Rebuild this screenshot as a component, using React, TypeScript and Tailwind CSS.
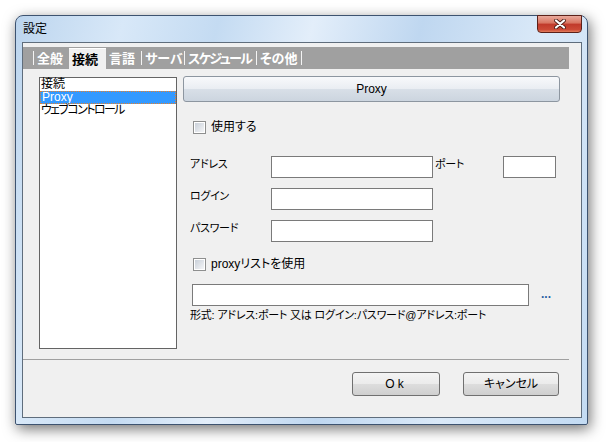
import React from 'react';

const font = "font-['Liberation_Sans','Noto_Sans_CJK_JP',sans-serif] [font-feature-settings:'palt']";

function Sep() {
  return <span className="w-px h-[14px] bg-[#f4f4f4] self-center shrink-0" />;
}

function Tab({ label, width, selected, tight }: { label: string; width: string; selected?: boolean; tight?: boolean }) {
  const track = tight ? 'tracking-[-1.6px]' : '';
  if (selected) {
    return (
      <div
        className={`${width} shrink-0 h-[21px] bg-[#f0f0f0] border-t border-white flex items-center pl-[3px] text-[13px] font-bold text-black leading-none whitespace-nowrap`}
      >
        {label}
      </div>
    );
  }
  return (
    <div
      className={`${width} ${track} shrink-0 overflow-hidden h-[22px] flex items-center pl-[3px] text-[13px] font-bold text-white leading-none whitespace-nowrap`}
    >
      {label}
    </div>
  );
}

function Checkbox({ label }: { label: string }) {
  return (
    <div className="flex items-center h-[13px]">
      <span className="w-[13px] h-[13px] border border-[#8e8f8f] bg-white p-px">
        <span className="block w-full h-full bg-[linear-gradient(135deg,#c9d0d9,#f4f5f7)]" />
      </span>
      <span className="ml-[5px] text-[12px] leading-[13px] text-black whitespace-nowrap">{label}</span>
    </div>
  );
}

function Field({ w }: { w: string }) {
  return <div className={`${w} h-[22px] border border-[#7a7a7a] bg-white`} />;
}

function Label({ text, w }: { text: string; w: string }) {
  return (
    <div className={`${w} h-[22px] text-[11px] leading-[16px] text-black tracking-[-0.3px] whitespace-nowrap`}>
      {text}
    </div>
  );
}

export default function App() {
  return (
    <div className={`w-[606px] h-[442px] bg-white pl-[15px] pt-[15px] ${font}`}>
      <div className="w-[573px] h-[410px] rounded-t-[8px] rounded-b-[2px] border border-[#3d5370] shadow-[2px_4px_14px_rgba(0,0,0,0.55)] bg-[linear-gradient(105deg,#bcd5ee_0%,#d8e8f8_16%,#c4dbf2_30%,#e3eefa_44%,#bfd7f0_60%,#dae9f8_78%,#c3dbf3_100%)] flex flex-col">
        {/* title bar */}
        <div className="h-[26px] flex items-start">
          <div className="pl-[7px] pt-[7px] text-[12px] leading-[12px] text-black">設定</div>
          <div className="ml-auto mr-[5px] -mt-px w-[45px] h-[18px] rounded-b-[4px] border border-[#5b2119] bg-[linear-gradient(#e9a99c,#d8735f_45%,#c0392a_50%,#cc4a36_85%,#e27f5e)] flex items-center justify-center">
            <svg width="14" height="10" viewBox="0 0 14 10">
              <path d="M3 1.5 L11 8.5 M11 1.5 L3 8.5" stroke="#4a1b15" strokeWidth="3.8" strokeLinecap="round" />
              <path d="M3 1.5 L11 8.5 M11 1.5 L3 8.5" stroke="#ffffff" strokeWidth="2.2" strokeLinecap="round" />
            </svg>
          </div>
        </div>

        {/* client area */}
        <div className="ml-[6px] w-[560px] h-[376px] border border-[#5f6d7c] bg-[#f0f0f0] pt-[4px]">
          {/* tab strip */}
          <div className="w-[546px] h-[22px] bg-[#a0a0a0] flex items-end pl-[10px]">
            <Sep />
            <Tab label="全般" width="w-[35px]" />
            <Tab label="接続" width="w-[37px]" selected />
            <Tab label="言語" width="w-[35px]" />
            <Sep />
            <Tab label="サーバ" width="w-[42px]" />
            <Sep />
            <Tab label="スケジュール" width="w-[71px]" tight />
            <Sep />
            <Tab label="その他" width="w-[44px]" />
            <Sep />
          </div>

          {/* content */}
          <div className="flex mt-[8px] pl-[16px] h-[272px]">
            <div className="w-[138px] h-[272px] border border-[#646464] bg-white text-[12px] text-black">
              <div className="h-[13px] leading-[13px] pl-[1px]">接続</div>
              <div className="h-[13px] leading-[11px] pl-px bg-[#3399ff] text-white border border-dotted border-[#e8802a]">
                Proxy
              </div>
              <div className="h-[13px] leading-[13px] pl-[1px] tracking-[-1.6px] whitespace-nowrap">ウェブコントロール</div>
            </div>

            <div className="ml-[6px] w-[377px] -mt-px flex flex-col">
              <div className="h-[26px] rounded-[3px] border border-[#8d96a0] bg-[linear-gradient(#f8f9fb,#e9edf2_50%,#d8dfe7_51%,#ccd5df)] flex items-center justify-center text-[12px] text-black">
                Proxy
              </div>

              <div className="mt-[19px] pl-[10px]">
                <Checkbox label="使用する" />
              </div>

              <div className="mt-[22px] pl-[7px] flex">
                <Label text="アドレス" w="w-[81px]" />
                <Field w="w-[162px]" />
                <div className="ml-[2px]">
                  <Label text="ポート" w="w-[68px]" />
                </div>
                <Field w="w-[53px]" />
              </div>

              <div className="mt-[10px] pl-[7px] flex">
                <Label text="ログイン" w="w-[81px]" />
                <Field w="w-[162px]" />
              </div>

              <div className="mt-[10px] pl-[7px] flex">
                <Label text="パスワード" w="w-[81px]" />
                <Field w="w-[162px]" />
              </div>

              <div className="mt-[16px] pl-[10px]">
                <Checkbox label="proxyリストを使用" />
              </div>

              <div className="mt-[13px] pl-[9px] flex items-center">
                <Field w="w-[337px]" />
                <span className="ml-[12px] text-[12px] leading-none text-[#2b5fa3] font-bold -mt-[2px]">...</span>
              </div>

              <div className="mt-[2px] pl-[7px] text-[11px] leading-[14px] text-black tracking-[-0.2px] whitespace-nowrap">
                形式: アドレス:ポート 又は ログイン:パスワード@アドレス:ポート
              </div>
            </div>
          </div>

          {/* separator */}
          <div className="mt-[10px] w-[546px] h-px bg-[#a0a0a0]" />

          {/* buttons */}
          <div className="mt-[12px] flex justify-end pr-[22px] gap-[23px]">
            <button className="w-[88px] h-[24px] rounded-[3px] border border-[#707070] bg-[linear-gradient(#f4f4f4,#ebebeb_50%,#dddddd_51%,#cfcfcf)] text-[12px] text-black tracking-[3px]">
              Ok
            </button>
            <button className="w-[96px] h-[24px] rounded-[3px] border border-[#707070] bg-[linear-gradient(#f4f4f4,#ebebeb_50%,#dddddd_51%,#cfcfcf)] text-[12px] text-black">
              キャンセル
            </button>
          </div>
        </div>
      </div>
    </div>
  );
}
